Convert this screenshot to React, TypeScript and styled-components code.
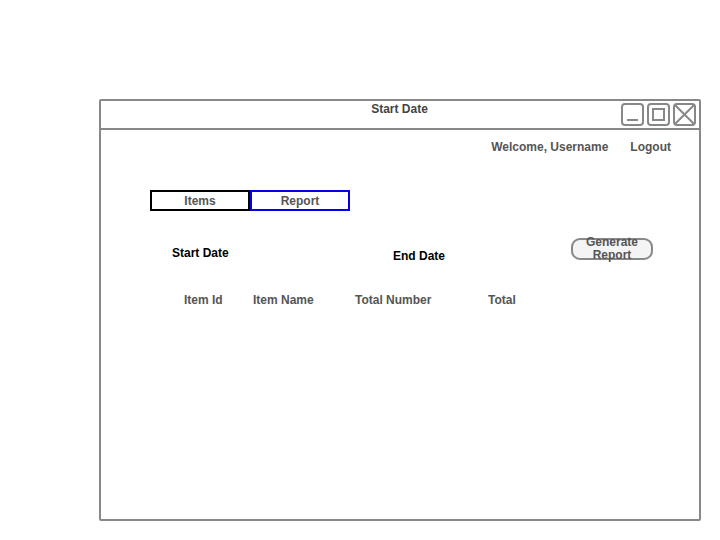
import styled, { createGlobalStyle } from "styled-components";

const GlobalStyle = createGlobalStyle`
  html, body {
    margin: 0;
    padding: 0;
    background: #ffffff;
    font-family: "Liberation Sans", Arial, sans-serif;
  }
`;

const Page = styled.div`
  padding: 99px 0 0 99px;
`;

const Window = styled.div`
  box-sizing: border-box;
  width: 602px;
  height: 422px;
  border: 2px solid #888888;
  border-radius: 2px;
  display: flex;
  flex-direction: column;
`;

const TitleBar = styled.div`
  box-sizing: border-box;
  height: 29px;
  border-bottom: 2px solid #888888;
  display: grid;
  grid-template-columns: 1fr auto 1fr;
  align-items: start;
  padding: 0 3px 0 2px;
`;

const Title = styled.div`
  grid-column: 2;
  font-size: 12px;
  font-weight: bold;
  color: #444444;
  line-height: 14px;
  padding-top: 1px;
`;

const Controls = styled.div`
  grid-column: 3;
  justify-self: end;
  display: flex;
  gap: 3px;
  padding-top: 2px;
`;

const ControlBox = styled.div`
  box-sizing: border-box;
  width: 23px;
  height: 23px;
  border: 2px solid #888888;
  border-radius: 4px;
  display: flex;
  align-items: center;
  justify-content: center;
`;

const Body = styled.div`
  flex: 1;
  display: flex;
  flex-direction: column;
  padding: 10px 28px 0 0;
`;

const UserBar = styled.div`
  display: flex;
  justify-content: flex-end;
  gap: 22px;
`;

const UserText = styled.span`
  font-size: 12px;
  font-weight: bold;
  color: #555555;
  line-height: 14px;
`;

const Tabs = styled.div`
  display: flex;
  margin: 36px 0 0 49px;
`;

const Tab = styled.div<{ $active?: boolean }>`
  box-sizing: border-box;
  width: 100px;
  height: 21px;
  border: 2px solid ${(p) => (p.$active ? "#0000ee" : "#000000")};
  display: flex;
  align-items: center;
  justify-content: center;
  font-size: 12px;
  font-weight: bold;
  color: #555555;
`;

const DateRow = styled.div`
  display: grid;
  grid-template-columns: 221px 178px 82px;
  align-items: start;
  margin: 27px 0 0 71px;
`;

const DateLabel = styled.div<{ $offset: number }>`
  padding-top: ${(p) => p.$offset}px;
  font-size: 12px;
  font-weight: bold;
  color: #000000;
  line-height: 14px;
`;

const GenerateButton = styled.button`
  box-sizing: border-box;
  width: 82px;
  height: 22px;
  padding: 0;
  border: 2px solid #888888;
  border-radius: 9px;
  background: #f4f4f4;
  display: flex;
  align-items: center;
  justify-content: center;
  font-family: "Liberation Sans", Arial, sans-serif;
  font-size: 12px;
  font-weight: bold;
  line-height: 13px;
  color: #555555;
  overflow: visible;
`;

const TableHead = styled.div`
  display: grid;
  grid-template-columns: 69px 102px 133px auto;
  margin: 30px 0 0 83px;
`;

const HeadCell = styled.div`
  font-size: 12px;
  font-weight: bold;
  color: #555555;
  line-height: 14px;
`;

const App = () => {
  return (
    <>
      <GlobalStyle />
      <Page>
        <Window>
          <TitleBar>
            <Title>Start Date</Title>
            <Controls>
              <ControlBox>
                <svg width="19" height="19" viewBox="0 0 19 19">
                  <line x1="4" y1="15" x2="15" y2="15" stroke="#888" strokeWidth="2" />
                </svg>
              </ControlBox>
              <ControlBox>
                <svg width="19" height="19" viewBox="0 0 19 19">
                  <rect x="4" y="4" width="11" height="11" fill="none" stroke="#888" strokeWidth="2" />
                </svg>
              </ControlBox>
              <ControlBox>
                <svg width="19" height="19" viewBox="0 0 19 19">
                  <line x1="0" y1="0" x2="19" y2="19" stroke="#888" strokeWidth="2" />
                  <line x1="19" y1="0" x2="0" y2="19" stroke="#888" strokeWidth="2" />
                </svg>
              </ControlBox>
            </Controls>
          </TitleBar>
          <Body>
            <UserBar>
              <UserText>Welcome, Username</UserText>
              <UserText>Logout</UserText>
            </UserBar>
            <Tabs>
              <Tab>Items</Tab>
              <Tab $active>Report</Tab>
            </Tabs>
            <DateRow>
              <DateLabel $offset={8}>Start Date</DateLabel>
              <DateLabel $offset={11}>End Date</DateLabel>
              <GenerateButton>
                Generate
                <br />
                Report
              </GenerateButton>
            </DateRow>
            <TableHead>
              <HeadCell>Item Id</HeadCell>
              <HeadCell>Item Name</HeadCell>
              <HeadCell>Total Number</HeadCell>
              <HeadCell>Total</HeadCell>
            </TableHead>
          </Body>
        </Window>
      </Page>
    </>
  );
};

export default App;
